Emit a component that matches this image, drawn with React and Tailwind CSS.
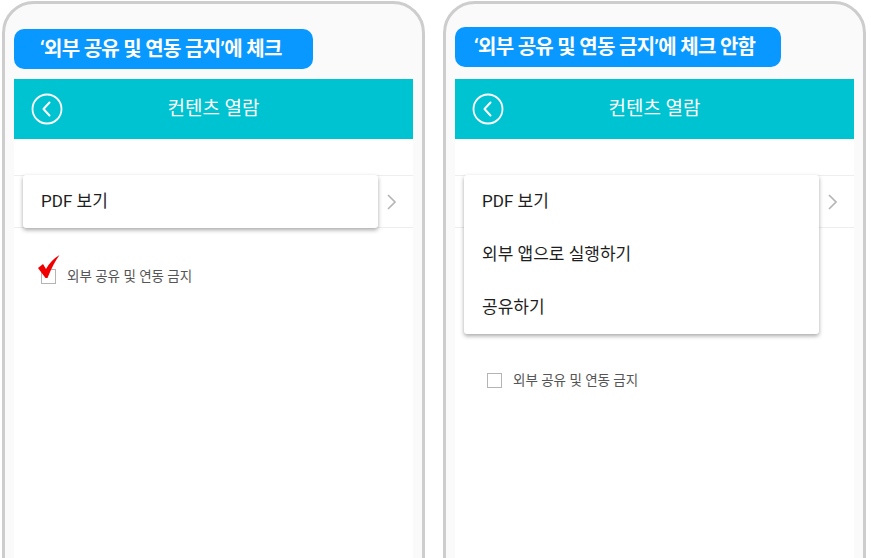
import React from 'react'

function BackIcon() {
  return (
    <svg width="32" height="32" viewBox="0 0 32 32" fill="none">
      <circle cx="16" cy="16" r="14.5" stroke="white" strokeWidth="1.8" />
      <path d="M18.5 9.5 L12.5 16 L18.5 22.5" stroke="white" strokeWidth="2" strokeLinecap="round" strokeLinejoin="round" />
    </svg>
  );
}

function Chevron() {
  return (
    <svg width="11" height="18" viewBox="0 0 11 18" fill="none">
      <path d="M2 2 L9 9 L2 16" stroke="#b5b5b5" strokeWidth="1.7" />
    </svg>
  );
}

function RedCheck() {
  return (
    <svg className="absolute left-[-4px] top-[-15px]" width="22" height="24" viewBox="0 0 22 24">
      <path d="M0 13 L5 9 L8 14 Q13 5 21.5 0 Q15 9 9.5 23 L7.5 23 Z" fill="#f00000" />
    </svg>
  );
}

function Frame({ label, labelClass, menu, checked, checkClass }) {
  return (
    <div className="w-[423px] h-[600px] shrink-0 border-[3px] border-[#cdcdcd] rounded-t-[32px] bg-[#fafafa] px-[9px] flex flex-col">
      <div className={`h-[40px] rounded-[10px] bg-[#0898ff] flex items-center text-white font-bold text-[20px] tracking-[-0.7px] whitespace-nowrap ${labelClass}`}>
        {label}
      </div>

      <div className="flex-1 bg-white">
        {/* Header */}
        <div className="h-[60px] bg-[#00c3d1] flex items-center relative">
          <div className="ml-[17px]">
            <BackIcon />
          </div>
          <div className="absolute inset-0 flex items-center justify-center text-white text-[19px] pointer-events-none">
            컨텐츠 열람
          </div>
        </div>

        {/* List row with popup menu */}
        <div className="mt-[36px] relative">
          <div className="h-[53px] border-y border-[#eeeeee] flex items-center justify-end pr-[16px]">
            <Chevron />
          </div>
          <div className="absolute left-[9px] top-0 w-[355px] bg-white rounded-[3px] shadow-[0_2px_4px_rgba(0,0,0,0.35)] z-10">
            {menu.map((item, i) => (
              <div key={i} className="h-[53px] flex items-center pl-[18px] text-[17px] text-[#1e1e1e]">
                {item}
              </div>
            ))}
          </div>
        </div>

        {/* Checkbox */}
        <div className={`flex items-center ${checkClass}`}>
          <div className="relative w-[15px] h-[15px] border border-[#b4b4b4] bg-white">
            {checked && <RedCheck />}
          </div>
          <span className="ml-[11px] text-[13.5px] text-[#555]">외부 공유 및 연동 금지</span>
        </div>
      </div>
    </div>
  );
}

export default function App() {
  return (
    <div className="w-[871px] h-[558px] overflow-hidden bg-white flex gap-[18px] pl-[2px] pt-[1px] font-['Roboto','Noto_Sans_CJK_KR',sans-serif]">
      <Frame
        label="‘외부 공유 및 연동 금지’에 체크"
        labelClass="w-[299px] pl-[26px] mt-[25px] mb-[10px]"
        menu={['PDF 보기']}
        checked
        checkClass="mt-[38px] pl-[27px]"
      />
      <Frame
        label="‘외부 공유 및 연동 금지’에 체크 안함"
        labelClass="w-[326px] pl-[19px] mt-[23px] mb-[12px]"
        menu={['PDF 보기', '외부 앱으로 실행하기', '공유하기']}
        checked={false}
        checkClass="mt-[142px] pl-[32px]"
      />
    </div>
  );
}
